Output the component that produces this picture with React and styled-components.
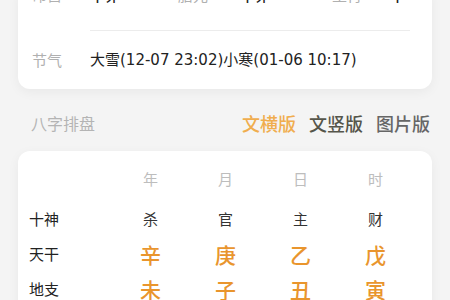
import React from 'react';
import styled, { createGlobalStyle } from 'styled-components';

const GlobalStyle = createGlobalStyle`
  html, body {
    margin: 0;
    padding: 0;
    background: #f4f4f4;
    font-family: "Noto Sans CJK SC", "Noto Sans", sans-serif;
    overflow: hidden;
  }
`;

const Page = styled.div`
  width: 450px;
  height: 300px;
  padding: 0 18px;
  box-sizing: border-box;
  overflow: hidden;
`;

const Card = styled.div`
  background: #fff;
  border-radius: 12px;
  box-shadow: 0 3px 12px rgba(0, 0, 0, 0.05);
`;

const InfoCard = styled(Card)`
  margin-top: -15px;
  padding: 0 22px 0 14px;
`;

const InfoRow = styled.div`
  display: grid;
  grid-template-columns: 58px 88px 62px 92px 58px auto;
  align-items: center;
  line-height: 20px;
  padding-bottom: ${(p) => (p.last ? '19px' : '25px')};
  padding-top: ${(p) => (p.last ? '19px' : '0')};
`;

const Label = styled.span`
  font-size: 15px;
  color: #b0b0b0;
`;

const Value = styled.span`
  font-size: 15px;
  font-weight: 500;
  color: #222;
  white-space: nowrap;
`;

const DateText = styled.span`
  grid-column: 2 / 7;
  font-family: "DejaVu Sans", "Noto Sans CJK SC", sans-serif;
  font-size: 15px;
  color: #222;
  white-space: nowrap;
`;

const Divider = styled.div`
  margin-left: 58px;
  height: 1px;
  background: #ececec;
`;

const SectionHead = styled.div`
  display: flex;
  align-items: center;
  justify-content: space-between;
  padding: 24px 2px 18px 13px;
  line-height: 20px;
`;

const SectionTitle = styled.span`
  font-size: 16px;
  color: #b4b4b4;
`;

const Tabs = styled.div`
  display: flex;
  gap: 13px;
`;

const Tab = styled.span`
  font-size: 18px;
  font-weight: 500;
  color: ${(p) => p.color};
`;

const PanCard = styled(Card)`
  padding: 18px 0 0 11px;
  border-radius: 12px 12px 0 0;
  height: 200px;
`;

const Grid = styled.div`
  display: grid;
  grid-template-columns: 84px repeat(4, 75px);
`;

const HeadCell = styled.div`
  font-size: 15px;
  color: #bdbdbd;
  text-align: center;
  line-height: 20px;
  margin-bottom: 12px;
`;

const RowLabel = styled.div`
  font-size: 15px;
  color: #222;
  height: 35px;
  display: flex;
  align-items: center;
`;

const Cell = styled.div`
  height: 35px;
  display: flex;
  align-items: center;
  justify-content: center;
  font-size: ${(p) => (p.big ? '21px' : '15px')};
  font-weight: ${(p) => (p.big ? 500 : 400)};
  color: ${(p) => (p.big ? '#e9952d' : '#333')};
`;

const rows = [
  { label: '十神', values: ['杀', '官', '主', '财'], big: false },
  { label: '天干', values: ['辛', '庚', '乙', '戊'], big: true },
  { label: '地支', values: ['未', '子', '丑', '寅'], big: true },
];

export default function App() {
  return (
    <Page>
      <GlobalStyle />
      <InfoCard>
        <InfoRow>
          <Label>命宫</Label>
          <Value>辛卯</Value>
          <Label>胎元</Label>
          <Value>辛卯</Value>
          <Label>生肖</Label>
          <Value>羊</Value>
        </InfoRow>
        <Divider />
        <InfoRow last>
          <Label>节气</Label>
          <DateText>大雪(12-07 23:02)小寒(01-06 10:17)</DateText>
        </InfoRow>
      </InfoCard>

      <SectionHead>
        <SectionTitle>八字排盘</SectionTitle>
        <Tabs>
          <Tab color="#f0ad4e">文横版</Tab>
          <Tab color="#55554a">文竖版</Tab>
          <Tab color="#666">图片版</Tab>
        </Tabs>
      </SectionHead>

      <PanCard>
        <Grid>
          <div />
          {['年', '月', '日', '时'].map((h) => (
            <HeadCell key={h}>{h}</HeadCell>
          ))}
          {rows.map((r) => (
            <React.Fragment key={r.label}>
              <RowLabel>{r.label}</RowLabel>
              {r.values.map((v, i) => (
                <Cell key={i} big={r.big}>{v}</Cell>
              ))}
            </React.Fragment>
          ))}
        </Grid>
      </PanCard>
    </Page>
  );
}
